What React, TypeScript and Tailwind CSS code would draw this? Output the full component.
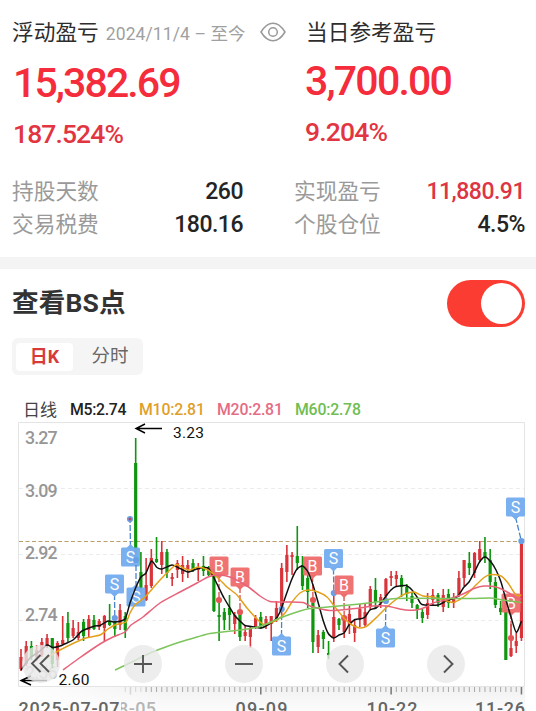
import React from "react";

const RED = "#d8343a";
const GREEN = "#0f950f";

// Candles: [up, high, bodyTop, bodyBottom, low] in chart units; null leaves a gap.
type Candle = [number, number, number, number, number] | null;
const candles: Candle[] = [
  [1, 649, 657, 669, 671], [1, 641, 646, 664, 666], [0, 641, 646, 657, 660], [1, 645, 650, 657, 661],
  [1, 638, 642, 655, 657], [1, 634, 638, 646, 648], [0, 638, 638, 664, 668], [1, 641, 643, 660, 667],
  [1, 616, 640, 644, 645], [0, 612, 623, 638, 642], [1, 620, 628, 636, 638], [1, 622, 632, 638, 640],
  [0, 619, 622, 636, 641], [1, 615, 619, 630, 638], [0, 615, 620, 629, 630], [1, 619, 621, 627, 630],
  [1, 615, 616, 628, 641], [0, 604, 621, 625, 626], [0, 617, 621, 629, 637], [1, 604, 610, 625, 630],
  [0, 612, 616, 630, 638], null, [0, 438, 463, 562, 562], [0, 552, 572, 589, 593],
  [1, 558, 585, 600, 601], [1, 549, 558, 586, 588], [0, 537, 559, 562, 563], [1, 541, 552, 565, 574],
  [0, 549, 552, 573, 578], [1, 573, 577, 579, 586], [1, 560, 563, 570, 578], [1, 556, 565, 574, 582],
  [1, 560, 565, 569, 578], [0, 559, 563, 569, 572], [1, 563, 567, 570, 581], [0, 556, 566, 571, 576],
  [0, 566, 567, 575, 576], [0, 569, 570, 611, 612], [0, 602, 615, 617, 641], [0, 608, 612, 620, 630],
  [0, 595, 608, 615, 630], [1, 612, 615, 624, 634], [0, 610, 613, 637, 641], [1, 625, 632, 636, 641],
  [1, 627, 628, 637, 648], [1, 615, 618, 628, 629], [0, 612, 617, 626, 629], [1, 616, 619, 625, 629],
  [1, 616, 616, 624, 641], [1, 601, 608, 620, 622], [1, 563, 568, 611, 615], [1, 545, 555, 572, 582],
  [1, 552, 555, 557, 575], [0, 526, 556, 563, 570], [0, 556, 565, 586, 590], [0, 575, 578, 592, 608],
  [0, 598, 603, 642, 653], [1, 630, 635, 647, 653], [0, 630, 632, 639, 649], [0, 641, 653, 655, 659],
  [1, 593, 617, 637, 642], [0, 618, 619, 625, 630], [1, 616, 620, 632, 638], [1, 606, 614, 625, 634],
  [1, 619, 625, 633, 642], [1, 604, 609, 619, 627], [1, 604, 612, 625, 627], [1, 586, 589, 607, 610],
  [0, 578, 590, 602, 609], [1, 594, 597, 603, 608], [1, 578, 579, 596, 600], [1, 571, 576, 578, 586],
  [1, 571, 575, 579, 587], [0, 575, 578, 587, 597], [0, 584, 587, 594, 601], [0, 592, 596, 603, 608],
  [0, 604, 605, 610, 619], [0, 609, 612, 618, 623], [1, 593, 603, 615, 619], [1, 589, 595, 600, 605],
  [0, 593, 595, 603, 607], [1, 589, 595, 607, 612], [0, 589, 594, 603, 608], [1, 593, 597, 603, 608],
  [1, 571, 578, 595, 597], [1, 560, 560, 578, 586], [0, 552, 563, 568, 575], [1, 552, 553, 573, 578],
  [1, 541, 549, 560, 562], [0, 537, 552, 558, 563], [0, 549, 560, 582, 589], [0, 577, 582, 605, 608],
  [0, 601, 608, 612, 615], [0, 602, 603, 660, 660], [1, 624, 648, 656, 657], [1, 633, 641, 646, 653],
  [1, 541, 541, 638, 641],
];

const candleX = (i: number) => 21 + i * 5.213;

type Pt = [number, number];

// Catmull-Rom smoothing through the given points
function curve(p: Pt[]) {
  let d = `M${p[0][0]} ${p[0][1]}`;
  for (let i = 0; i < p.length - 1; i++) {
    const a = p[i - 1] ?? p[i];
    const b = p[i];
    const c = p[i + 1];
    const e = p[i + 2] ?? c;
    const k = 9;
    d += `C${b[0] + (c[0] - a[0]) / k} ${b[1] + (c[1] - a[1]) / k} ${c[0] - (e[0] - b[0]) / k} ${c[1] - (e[1] - b[1]) / k} ${c[0]} ${c[1]}`;
  }
  return d;
}

const ma5: Pt[] = [
  [21, 670], [26, 663], [31, 657], [40, 651], [47, 645], [53, 647.5], [60, 646], [67, 643], [73, 640], [78, 635], [82, 631],
  [95, 626], [100, 625.5], [108, 621], [115, 622], [125, 619], [130, 603], [136, 587], [141, 577], [146, 573],
  [151.5, 561], [157, 567.5], [162, 569], [172, 565], [178, 567.5], [188, 572], [198, 568.5], [208, 568], [213, 576],
  [219, 588], [224, 598], [230, 608], [235, 616], [240, 621], [245, 625.5], [255, 627], [261, 628], [266, 626],
  [275, 620], [280, 612], [285, 598], [291.5, 580], [297, 569], [302.5, 566], [308, 572], [313, 585],
  [318, 602], [323, 620], [328, 633], [333.5, 638], [339, 635], [344, 633], [349, 625], [355, 619.5],
  [360, 619], [365, 617], [370, 610], [376, 608], [381, 603], [386, 596], [391, 590], [396, 586.5],
  [406, 585.5], [412, 590], [417, 597], [422, 604.5], [438, 605], [446, 601], [457, 597], [464, 587],
  [469, 582], [474, 573], [479.5, 562], [485, 557], [491, 562], [496, 570], [501, 582], [506, 600],
  [511, 617], [516.3, 632.5], [521.5, 621],
];
const ma10: Pt[] = [
  [44, 660], [50, 656], [58, 651], [83, 639], [100, 635], [108, 629], [115, 625], [126, 622], [130, 613], [135, 605], [145, 597],
  [160, 580], [172, 568], [177, 564.5], [183, 568], [190, 570], [198, 567], [208, 570], [218, 578], [227, 587],
  [237, 595], [247, 608], [260, 622], [265, 624.5], [277, 620], [285, 613], [292, 602], [300, 593], [308, 590],
  [318, 592], [327, 597], [335, 607], [343, 617], [352, 625], [360, 628], [367, 626], [377, 617],
  [387, 607], [398, 598], [406, 593.5], [414, 592], [423, 596], [433, 597], [443, 600], [453, 602.5], [459, 600],
  [466, 595], [474, 587], [484, 577.5], [491, 574.5], [501, 576], [508, 583], [516, 595], [521.5, 595],
];
const ma20: Pt[] = [
  [63, 670], [78, 659], [100, 644], [113, 637], [125, 632], [131, 625], [143, 617], [160, 603], [180, 592],
  [197, 583], [208, 577], [218, 575], [230, 577], [247, 586], [260, 596], [270, 601.5], [285, 602], [303, 602.5],
  [310, 606], [330, 610.5], [360, 608], [373, 606], [387, 606], [396, 608], [406, 610], [416, 610], [426, 607],
  [433, 603], [449, 599], [463, 594], [474, 588.5], [484, 586], [496, 587], [509, 593], [516, 598], [521.5, 599],
];
const ma60: Pt[] = [
  [115, 670], [130, 663], [147, 654.5], [163, 648], [180, 642], [197, 637], [210, 633.5], [240, 630], [260, 626.5],
  [280, 618], [300, 611], [310, 608.5], [333, 606.5], [360, 604], [380, 601.5], [396, 598.5], [456, 598.5], [473, 598.5],
  [490, 598], [503, 600], [521.5, 602.5],
];

interface Mark {
  t: "B" | "S";
  x: number;
  y: number;
  dx: number;
  dy: number;
}
const marks: Mark[] = [
  { t: "S", x: 130.5, y: 557, dx: 130, dy: 519 },
  { t: "S", x: 114.5, y: 584, dx: 114.8, dy: 618 },
  { t: "S", x: 136, y: 597, dx: 136, dy: 560 },
  { t: "B", x: 219, y: 566, dx: 219, dy: 600 },
  { t: "B", x: 240, y: 577, dx: 240, dy: 612 },
  { t: "S", x: 281.5, y: 646, dx: 281.7, dy: 609 },
  { t: "B", x: 312.5, y: 566, dx: 313, dy: 600 },
  { t: "S", x: 333.5, y: 558.5, dx: 333.8, dy: 593 },
  { t: "B", x: 344, y: 585, dx: 344.2, dy: 618 },
  { t: "S", x: 385.5, y: 638, dx: 385.9, dy: 601 },
  { t: "S", x: 515.5, y: 507, dx: 521.4, dy: 541 },
  { t: "B", x: 511, y: 603, dx: 511, dy: 638 },
];

function Marker({ t, x, y, dx, dy }: Mark) {
  const fill = t === "B" ? "#ee6d6d" : "#75adee";
  const line = t === "B" ? "#d84b4b" : "#4885cc";
  const s = dy > y ? 1 : -1;
  return (
    <g>
      <line x1={x} y1={y + s * 10} x2={dx} y2={dy} stroke={line} strokeWidth="1.3" strokeDasharray="6 2" />
      <circle cx={dx} cy={dy} r="3.1" fill={t === "B" ? "#e45757" : "#6b9fe5"} />
      {dy === 519 && <circle cx={dx} cy={dy} r="1.5" fill="#b94466" />}
      <path d={`M${x - 4} ${y + s * 9}L${x} ${y + s * 13}L${x + 4} ${y + s * 9}Z`} fill={fill} />
      <rect x={x - 9.5} y={y - 9.5} width="19" height="19" rx="1.5" fill={fill} fillOpacity="0.96" />
      <text x={x} y={y + 5.5} fontSize="16" textAnchor="middle" fill="#fff">{t}</text>
    </g>
  );
}

function Chart() {
  return (
    <svg className="block font-[Roboto,sans-serif]" width="536" height="291" viewBox="0 420 536 291">
      <defs>
        <linearGradient id="ruler" x1="0" x2="0" y1="0" y2="1">
          <stop offset="0" stopColor="#f1f1f1" />
          <stop offset="1" stopColor="#fcfcfc" />
        </linearGradient>
        <linearGradient id="rulerFade" x1="0" x2="1" y1="0" y2="0">
          <stop offset="0" stopColor="#fff" />
          <stop offset="0.3" stopColor="#fff" stopOpacity="0" />
        </linearGradient>
      </defs>
      <rect x="18" y="687" width="507" height="24" fill="url(#ruler)" />
      <rect x="18" y="687" width="507" height="24" fill="url(#rulerFade)" />
      <path d="M18.5 686.5V422.5H524.5V686.5Z" fill="none" stroke="#e4e4e4" />
      <path d="M19 488.5H524M19 554.5H524M19 620.5H524" stroke="#ececec" strokeDasharray="4 3" />
      <g fontSize="17.8" fill="#969696" fontWeight="500">
        <text x="25" y="444" textLength="32.5">3.27</text>
        <text x="25" y="497" textLength="32.5">3.09</text>
        <text x="25" y="559" textLength="32.5">2.92</text>
        <text x="25" y="621" textLength="32.5">2.74</text>
        <text x="25" y="679" textLength="32.5" fill="#c8c8c8">2.56</text>
      </g>
      <path d="M19 541.5H524" stroke="#bb9f66" strokeDasharray="4 2.5" />

      {candles.map((c, i) => {
        if (!c) return null;
        const color = c[0] ? RED : GREEN;
        const x = candleX(i);
        return (
          <g key={i} fill={color}>
            <rect x={x - 0.8} y={c[1]} width="1.6" height={c[4] - c[1]} />
            <rect x={x - 1.6} y={c[2]} width="3.2" height={c[3] - c[2]} />
          </g>
        );
      })}

      {marks.map((m, i) => <Marker key={i} {...m} />)}

      <g fill="none" strokeWidth="1.5" strokeLinejoin="round">
        <path d={curve(ma5)} stroke="#111" />
        <path d={curve(ma10)} stroke="#e3a01b" />
        <path d={curve(ma20)} stroke="#e8637a" />
        <path d={curve(ma60)} stroke="#7cc45c" />
      </g>

      {Array.from({ length: 77 }, (_, k) => k + 20).map((i) => {
        const major = i === 46 || i === 71 || i === 96 || i === 21;
        return (
          <line
            key={i}
            x1={candleX(i)}
            x2={candleX(i)}
            y1="687"
            y2={major ? 694.5 : 692}
            stroke={i < 24 ? "#d5d5d5" : major ? "#777" : "#a8a8a8"}
            strokeWidth={major ? 1.5 : 1}
          />
        );
      })}
      <g fontSize="18" fill="#666" fontWeight="500">
        <text x="118" y="715" textLength="38" fill="#b5b5b5">8-05</text>
        <rect x="112" y="698" width="9" height="13" fill="#fafafa" />
        <text x="18.5" y="715" textLength="101">2025-07-07</text>
        <text x="235.5" y="715" textLength="52">09-09</text>
        <text x="366.5" y="715" textLength="51">10-22</text>
        <text x="475" y="715" textLength="50">11-26</text>
      </g>

      <g stroke="#000" strokeWidth="1.4" fill="none">
        <path d="M162 428.5H136M145 424L136 428.5L145 433" />
        <path d="M47 680.5H21M31 676L21 680.5L31 685" />
      </g>
      <g fontSize="15.5" fill="#111">
        <text x="173" y="438" textLength="31">3.23</text>
        <text x="58.5" y="685" textLength="31">2.60</text>
      </g>
    </svg>
  );
}

const controls: { left: string; d: string }[] = [
  { left: "left-[22px]", d: "M18.500 10L10 18.500L18.500 27M27 10L18.500 18.500L27 27" },
  { left: "left-[124px]", d: "M10 19H28M19 10V28" },
  { left: "left-[225px]", d: "M10 19H28" },
  { left: "left-[326px]", d: "M22 10.500L13.500 19L22 27.500" },
  { left: "left-[427px]", d: "M17 10.500L25.500 19L17 27.500" },
];

function Stat({ label, value, red }: { label: string; value: string; red?: boolean }) {
  return (
    <div className="flex h-[33px] items-center justify-between">
      <span className="text-[21.7px] text-[#9a9a9a]">{label}</span>
      <span className={"-mt-[2px] text-[23px] font-medium tracking-[-0.5px] " + (red ? "text-[#dc3544]" : "text-[#242424]")}>{value}</span>
    </div>
  );
}

export default function App() {
  return (
    <div className="h-[711px] w-[536px] overflow-hidden bg-white font-[Roboto,'Noto_Sans_CJK_SC',sans-serif] leading-none whitespace-nowrap">
      <section className="h-[257px] pt-[16px] pl-[12px] pr-[11px]">
        <div className="flex">
          <div className="w-[293px]">
            <div className="flex h-[34px] items-center text-[#2d2d2d]">
              <span className="text-[21.7px]">浮动盈亏</span>
              <span className="ml-[7px] mt-[3px] w-[139px] text-[17.5px] tracking-[0.1px] text-[#a0a0a0]">2024/11/4 – 至今</span>
              <svg className="ml-[15px] -mt-[2px]" width="26" height="20" viewBox="0 0 26 20" fill="none" stroke="#999" strokeWidth="1.5">
                <path d="M1 10C5 3.5 9 1.2 13 1.2S21 3.5 25 10C21 16.500 17 18.800 13 18.800S5 16.500 1 10Z" />
                <circle cx="13" cy="10" r="4.300" />
              </svg>
            </div>
            <div className="mt-[13px] ml-px text-[41px] font-medium tracking-[-1.9px] text-[#f42c3c]">15,382.69</div>
            <div className="mt-[17px] ml-px text-[26.500px] font-medium tracking-[-0.9px] text-[#e23541]">187.524%</div>
          </div>
          <div>
            <div className="ml-px flex h-[34px] items-center text-[21.7px] text-[#2d2d2d]">当日参考盈亏</div>
            <div className="mt-[11px] text-[41px] font-medium tracking-[-1.8px] text-[#f42c3c]">3,700.00</div>
            <div className="mt-[17px] text-[26.500px] font-medium tracking-[-0.8px] text-[#e23541]">9.204%</div>
          </div>
        </div>
        <div className="mt-[28px] grid grid-cols-[231px_231px] gap-x-[51px]">
          <Stat label="持股天数" value="260" />
          <Stat label="实现盈亏" value="11,880.91" red />
          <Stat label="交易税费" value="180.16" />
          <Stat label="个股仓位" value="4.5%" />
        </div>
      </section>
      <div className="h-[12px] bg-[#f4f4f4]" />
      <section className="h-[151px]">
        <div className="flex items-center justify-between pt-[11px] pr-[11px] pl-[12px]">
          <h2 className="text-[26.500px] font-bold tracking-[0.2px] text-[#333]">查看BS点</h2>
          <button className="flex h-[47px] w-[78px] items-center justify-end rounded-full bg-[#fb3c33] pr-[3px]">
            <span className="h-[41px] w-[41px] rounded-full bg-white" />
          </button>
        </div>
        <div className="mt-[11px] ml-[12px] flex h-[37px] w-[131px] items-center rounded-[6px] bg-[#f5f5f5] p-[4px]">
          <div className="flex h-[28px] w-[57px] items-center justify-center rounded-[4px] bg-white text-[18px] font-bold text-[#d83a3a]">日K</div>
          <div className="flex-1 pl-[8px] text-center text-[18.500px] text-[#666]">分时</div>
        </div>
        <div className="mt-[25px] flex h-[20px] items-center pl-[23px] text-[15.8px] font-medium">
          <span className="w-[47px] text-[17px] font-normal text-[#444]">日线</span>
          <span className="w-[69px] tracking-[-0.3px] text-[#222]">M5:2.74</span>
          <span className="w-[78px] tracking-[-0.2px] text-[#dfa02a]">M10:2.81</span>
          <span className="w-[78px] tracking-[-0.2px] text-[#e46c83]">M20:2.81</span>
          <span className="tracking-[-0.2px] text-[#70bd52]">M60:2.78</span>
        </div>
      </section>
      <div className="relative">
        <Chart />
        {controls.map((c) => (
          <button key={c.left} className={"absolute top-[225px] h-[38px] w-[38px] rounded-full bg-[#e8e8e8]/80 " + c.left}>
            <svg width="38" height="38" viewBox="0 0 38 38" fill="none" stroke="#555" strokeWidth="1.900">
              <path d={c.d} />
            </svg>
          </button>
        ))}
      </div>
    </div>
  );
}
